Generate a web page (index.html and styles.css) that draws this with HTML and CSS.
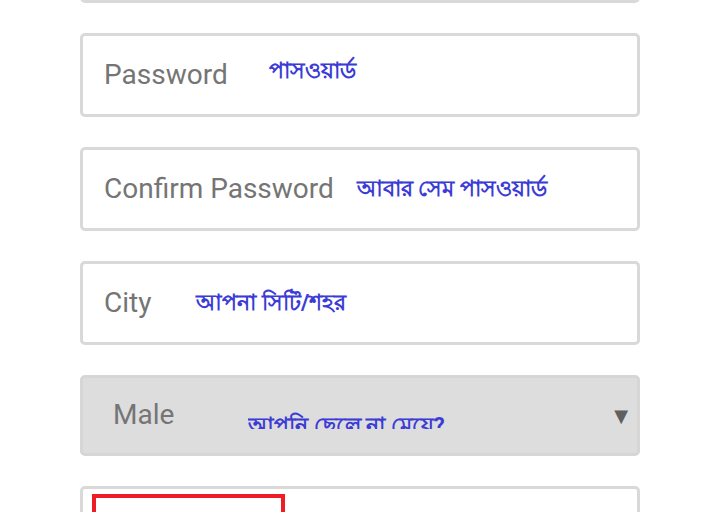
FILE: index.html
```html
<!DOCTYPE html>
<html lang="en">

<head>
    <meta charset="UTF-8">
    <meta name="viewport" content="width=device-width, initial-scale=1.0">
    <title>Register</title>
    <link rel="stylesheet" href="styles.css">
</head>

<body>

    <form class="form">
        <div class="field"></div>

        <div class="field">
            <span class="label">Password</span>
            <span class="hint hint-pass">পাসওয়ার্ড</span>
        </div>

        <div class="field">
            <span class="label">Confirm Password</span>
            <span class="hint hint-confirm">আবার সেম পাসওয়ার্ড</span>
        </div>

        <div class="field">
            <span class="label">City</span>
            <span class="hint hint-city">আপনা সিটি/শহর</span>
        </div>

        <div class="field select">
            <span class="label">Male</span>
            <span class="hint hint-gender">আপনি ছেলে না মেয়ে?</span>
            <span class="arrow">&#9660;</span>
        </div>

        <div class="field upload">
            <div class="photo"></div>
            <span class="hint hint-photo">আপনার ছবি আপলোড করুন</span>
        </div>
    </form>

</body>

</html>
```

FILE: styles.css
```css
body {
    margin: 0;
    font-family: Roboto, "Noto Sans", sans-serif;
    background: #ffffff;
    overflow: hidden;
}

.form {
    width: 560px;
    margin: -81px auto 0;
    display: flex;
    flex-direction: column;
    gap: 30px;
}

.field {
    box-sizing: border-box;
    height: 84px;
    border: 3px solid #d9d9d9;
    border-radius: 5px;
    background: #ffffff;
    display: flex;
    align-items: center;
    padding-left: 21px;
    position: relative;
}

.label {
    font-size: 28px;
    color: #757575;
    margin-bottom: 2px;
}

.hint {
    font-size: 22px;
    font-weight: bold;
    color: #3b3bd6;
}

.hint-pass {
    margin-left: 41px;
    margin-top: -8px;
}

.hint-confirm {
    margin-left: 23px;
}

.hint-city {
    margin-left: 45px;
}

.select {
    height: 81px;
    background: #dddddd;
    border-color: #d6d6d6;
    padding-left: 30px;
    overflow: hidden;

    .hint {
        margin-left: 74px;
        margin-top: 8px;
        height: 19px;
        line-height: 32px;
        overflow: hidden;
        display: flex;
        align-items: flex-start;
    }

    .arrow {
        margin-left: auto;
        margin-right: 9px;
        font-size: 18px;
        color: #606060;
        font-family: "DejaVu Sans", sans-serif;
    }
}

.upload {
    align-items: flex-start;
    padding-left: 9px;
    padding-top: 5px;

    .photo {
        width: 193px;
        height: 60px;
        box-sizing: border-box;
        border: 4px solid #ee1c25;
    }

    .hint {
        margin-left: 40px;
        margin-top: 22px;
    }
}
```
